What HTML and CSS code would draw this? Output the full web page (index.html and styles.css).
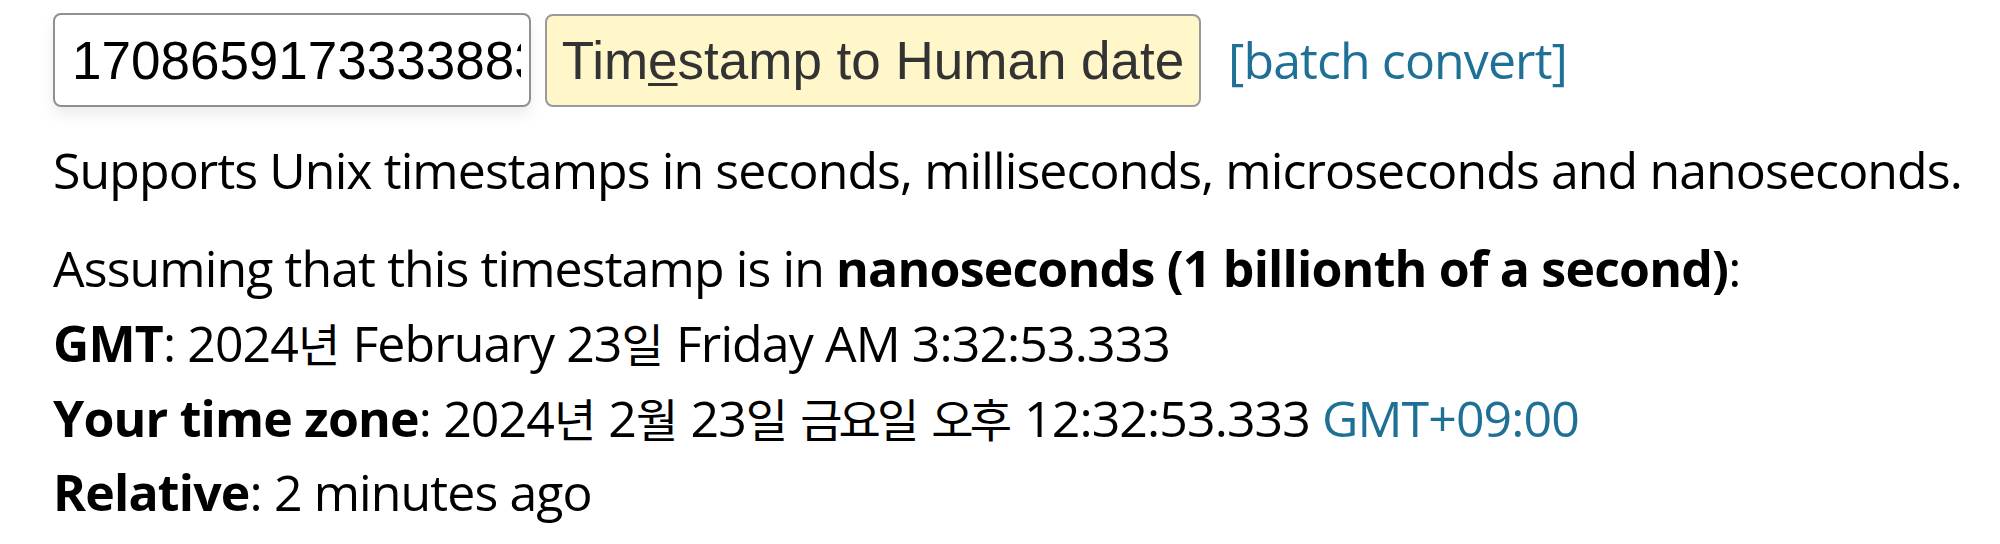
FILE: index.html
```html
<!DOCTYPE html>
<html lang="en">
<head>
<meta charset="utf-8">
<title>Epoch Converter</title>
<link rel="stylesheet" href="styles.css">
</head>
<body>
<div class="page">
  <form class="toolbar">
    <input class="ts-input" type="text" value="1708659173333883000">
    <button class="btn" type="button">Tim<u>e</u>stamp to Human date</button>
    <a class="batch" href="#">[batch convert]</a>
  </form>
  <p class="note">Supports Unix timestamps in seconds, milliseconds, microseconds and nanoseconds.</p>
  <div class="result">
    <div class="line">Assuming that this timestamp is in <b>nanoseconds (1 billionth of a second)</b>:</div>
    <div class="line"><b>GMT</b>: 2024<span class="ko" lang="ko">년</span> February 23<span class="ko" lang="ko">일</span> Friday AM 3:32:53.333</div>
    <div class="line"><b>Your time zone</b>: 2024<span class="ko" lang="ko">년</span> 2<span class="ko" lang="ko">월</span> 23<span class="ko" lang="ko">일</span> <span class="ko" lang="ko">금요일</span> <span class="ko" lang="ko">오후</span> 12:32:53.333 <span class="tz">GMT+09:00</span></div>
    <div class="line"><b>Relative</b>: 2 minutes ago</div>
  </div>
</div>
</body>
</html>
```
FILE: styles.css
```css
html, body {
  margin: 0;
  padding: 0;
  background: #fff;
}
body {
  font-family: "Open Sans", "Noto Sans CJK KR", sans-serif;
  font-size: 50px;
  line-height: 74px;
  letter-spacing: -0.9px;
  color: #000;
}
.page {
  padding: 13px 0 0 53px;
}
.toolbar {
  display: flex;
  align-items: center;
  margin: 0;
}
.ts-input {
  box-sizing: border-box;
  width: 478px;
  height: 94px;
  border: 2px solid #909090;
  border-radius: 8px;
  padding: 0 8px 0 17px;
  font-family: "Liberation Sans", Arial, sans-serif;
  font-size: 53px;
  letter-spacing: 0;
  color: #000;
  background: #fff;
  box-shadow: 0 8px 14px rgba(0, 0, 0, 0.08);
  outline: none;
}
.btn {
  box-sizing: border-box;
  margin-left: 14px;
  width: 656px;
  height: 93px;
  padding: 0 10px;
  border: 2px solid #9a9a9a;
  border-radius: 8px;
  background: #fff6c9;
  font-family: "Liberation Sans", Arial, sans-serif;
  font-size: 53px;
  letter-spacing: 0;
  color: #333;
  white-space: nowrap;
}
.btn u {
  text-decoration-thickness: 3px;
  text-underline-offset: 4px;
}
.batch {
  margin-left: 27px;
  color: #1f7096;
  text-decoration: none;
  white-space: nowrap;
}
.note {
  margin: 26px 0 0;
  white-space: nowrap;
}
.result {
  margin-top: 24px;
}
.line {
  white-space: nowrap;
}
.ko {
  font-family: "Noto Sans CJK KR", sans-serif;
  font-size: 46px;
  letter-spacing: -4px;
  margin-right: 4px;
}
.tz {
  color: #1f7096;
}
b {
  font-weight: 700;
  letter-spacing: -0.8px;
}
```
